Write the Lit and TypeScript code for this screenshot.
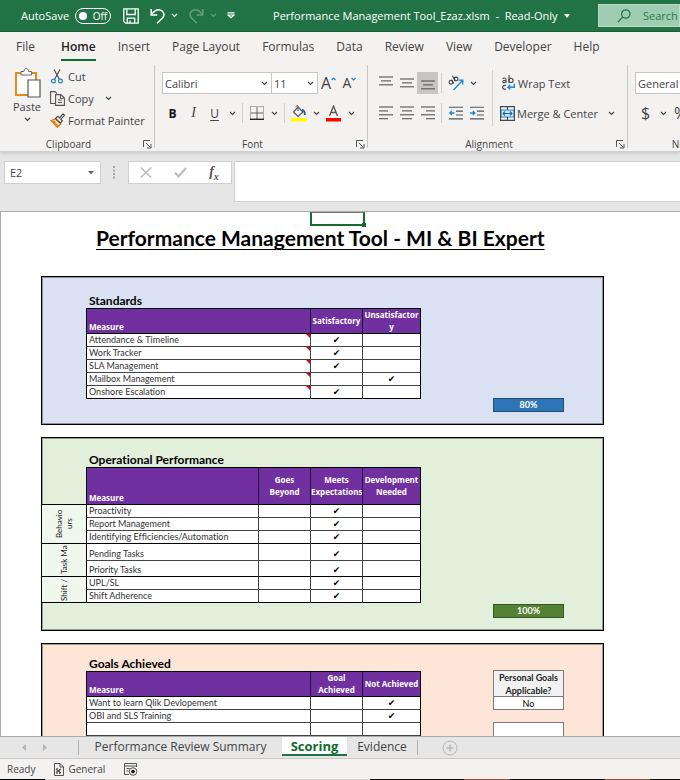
import { LitElement, html, css, svg, nothing } from "lit";
import { customElement, property } from "lit/decorators.js";
import { classMap } from "lit/directives/class-map.js";

const chevron = () => html`<svg class="chev" width="7" height="5" viewBox="0 0 7 5" fill="none" stroke="currentColor" stroke-width="1.1"><path d="M1 1l2.5 2.5L6 1" /></svg>`;

const launcher = (label: string) => html`<button class="launch" aria-label=${label}>
  <svg width="9" height="9" viewBox="0 0 9 9" fill="none" stroke="#555" stroke-width="1"><path d="M.5 7V.5H7M3 3l4.5 4.5M8 4v4H4" /></svg>
</button>`;

/* Stacked strokes, one [x1, x2] pair per line. */
const lines = (rows: number[][], top: number) => html`<svg width="14" height="14" viewBox="0 0 14 14" stroke="#555" stroke-width="1.1">
  ${rows.map(([a, b], i) => svg`<path d=${`M${a} ${top + i * 3.9}H${b}`} />`)}
</svg>`;

const indent = (arrow: string) => html`<svg width="14" height="14" viewBox="0 0 14 14" fill="none" stroke="#555" stroke-width="1.1">
  <path d="M0 1.2h14M7 5.1h7M7 9h7M0 12.9h14" /><path d=${arrow} stroke="#1e86d8" stroke-width="1.3" />
</svg>`;

interface Row {
  name: string;
  marks: boolean[];
  group?: string;
  span?: number;
  tall?: boolean;
  note?: boolean;
}

@customElement("score-table")
export class ScoreTable extends LitElement {
  static styles = css`
    :host { display: block; flex: none; }
    table { border-collapse: separate; border-spacing: 0; table-layout: fixed; width: 335px; }
    table.grouped { width: 379px; }
    .group { width: 44px; }
    .c { width: 52px; }
    .last { width: 58px; }
    th, td {
      box-sizing: border-box; height: 13px; padding: 0; overflow: hidden;
      font-size: 9px; line-height: 12px; text-align: center; vertical-align: middle;
      border-right: 1px solid #444; border-bottom: 1px solid #444; background: #fff; color: #333;
    }
    tbody th { font-weight: 400; text-align: left; padding-left: 2px; position: relative; white-space: nowrap; }
    thead th {
      height: 25px; background: #7030a0; color: #fff; font-weight: 700; font-size: 8px; white-space: pre;
      font-family: "Open Sans", sans-serif; border-right-color: #2a0a45; border-top: 1px solid #000;
    }
    table.grouped thead th { height: 38px; }
    thead th.measure { text-align: left; vertical-align: bottom; padding-left: 2px; border-left: 1px solid #000; }
    tbody th.name { border-left: 1px solid #000; }
    thead tr > *, tbody tr.end > *, tbody th.side { border-bottom-color: #000; }
    tr > :last-child { border-right-color: #000; }
    tr.tall > * { height: 17px; vertical-align: bottom; }
    tr.tall.end > * { height: 16px; }
    thead td.corner { background: none; border-right: 0; }
    tbody th.side { background: #f0f7ec; border-right: 0; padding: 0; color: #222; vertical-align: middle; font-size: 8px; }
    .vert {
      display: flex; align-items: center; justify-content: center; width: 12px; height: 24px; margin: 0 auto;
      overflow: hidden; writing-mode: vertical-rl; transform: rotate(180deg); line-height: 10px;
    }
    .vert.task { height: 32px; }
    .vert.two { width: 20px; height: 36px; text-align: center; }
    .vert span { white-space: pre; }
    .note::after {
      content: ""; position: absolute; right: 0; top: 0;
      border-top: 4px solid #e00000; border-left: 4px solid transparent;
    }
    td.mark { font-family: "DejaVu Sans", sans-serif; color: #000; }
  `;

  @property({ attribute: false }) heads: string[] = [];
  @property({ attribute: false }) rows: Row[] = [];
  @property({ type: Boolean }) grouped = false;

  render() {
    const { heads, rows, grouped } = this;
    return html`<table class=${classMap({ grouped })}>
      <colgroup>
        ${grouped ? html`<col class="group" />` : nothing}
        <col />
        ${heads.map((_, i) => html`<col class=${i === heads.length - 1 ? "last" : "c"} />`)}
      </colgroup>
      <thead><tr>
        ${grouped ? html`<td class="corner"></td>` : nothing}
        <th class="measure" scope="col">Measure</th>
        ${heads.map((h) => html`<th scope="col">${h}</th>`)}
      </tr></thead>
      <tbody>
        ${rows.map((r, i) => html`<tr class=${classMap({ tall: !!r.tall, end: i === rows.length - 1 || !!rows[i + 1].group })}>
          ${r.group ? html`<th class="side" scope="rowgroup" rowspan=${r.span ?? 1}>
            <div class=${classMap({ vert: true, task: !!r.tall, two: r.group.includes("\n") })}><span>${r.group}</span></div></th>` : nothing}
          <th class=${classMap({ name: true, note: !!r.note })} scope="row">${r.name}</th>
          ${r.marks.map((m) => html`<td class="mark">${m ? "✔" : ""}</td>`)}
        </tr>`)}
      </tbody>
    </table>`;
  }
}

@customElement("app-root")
export class AppRoot extends LitElement {
  static styles = css`
    :host {
      display: flex; flex-direction: column; height: 100vh; overflow: hidden;
      font-family: "Open Sans", "Noto Sans", sans-serif; font-size: 11px; color: #444; background: #e6e6e6;
    }
    * { box-sizing: border-box; }
    button, input, select, textarea { font: inherit; color: inherit; margin: 0; padding: 0; border: 0; background: none; border-radius: 0; outline: 0; }
    button { display: inline-flex; align-items: center; justify-content: center; white-space: nowrap; }
    svg { flex: none; display: block; }

    .titlebar { display: flex; align-items: center; height: 32px; flex: none; background: #217346; border-bottom: 1px solid #1a5c38; color: #fff; padding-left: 21px; }
    .autosave { display: flex; align-items: center; gap: 6px; }
    .toggle { width: 36px; height: 16px; border: 1px solid #fff; border-radius: 8px; gap: 6px; font-size: 10px; }
    .toggle i { width: 8px; height: 8px; border-radius: 50%; background: #fff; }
    .quick { display: flex; align-items: center; margin-left: 12px; }
    .quick .g { margin-left: 11px; }
    .quick .s { margin-left: 6px; }
    .quick .dim { opacity: .3; }
    .quick .more { margin-left: 10px; }
    .doc { margin-left: 38px; flex: 1; justify-content: flex-start; gap: 6px; }
    .search { display: flex; align-items: center; gap: 12px; flex: none; width: 82px; height: 23px; background: #a0cdb2; border: 1px solid #b9dcc6; padding-left: 18px; color: #217346; overflow: hidden; }
    .search input { width: 100px; flex: none; }
    .search input::placeholder { color: #2c7a50; opacity: 1; }

    .tabs { display: flex; height: 30px; flex: none; background: #f3f2f1; padding-left: 16px; gap: 22px; align-items: center; }
    .tabs button { font-size: 12px; height: 28px; border-bottom: 2px solid transparent; }
    .tabs button:first-child { margin-right: 4px; }
    .tabs button.on { font-weight: 600; color: #222; border-color: #0f6b2f; }

    .ribbon { display: flex; height: 90px; flex: none; background: #f3f2f1; border-bottom: 1px solid #d0d0d0; padding-top: 3px; overflow: hidden; box-shadow: 0 2px 3px #cfcfcf; position: relative; }
    .group { position: relative; display: flex; flex-direction: column; flex: none; height: 86px; }
    .group::after { content: ""; position: absolute; right: 0; top: 0; bottom: 3px; width: 1px; background: #c8c6c4; }
    .body { flex: 1; }
    .foot { position: relative; height: 14px; line-height: 14px; font-size: 10px; text-align: center; padding-right: 18px; }
    .launch { position: absolute; right: 3px; top: 3px; }
    .clip { width: 155px; }
    .font { width: 213px; }
    .align { width: 260px; }
    .num { width: 144px; }
    .clip .body { display: flex; padding-left: 11px; }
    .paste { flex-direction: column; width: 32px; gap: 1px; justify-content: flex-start; padding-top: 3px; }
    .paste .chev { margin-top: 2px; }
    .side { display: flex; flex-direction: column; align-items: flex-start; margin-left: 7px; }
    .side button { height: 22px; gap: 3px; }
    .side .chev { margin-left: 8px; }
    .rows { display: flex; flex-direction: column; align-items: flex-start; gap: 8px; padding: 7px 0 0 7px; }
    .row { display: flex; align-items: center; height: 22px; }
    .select { position: relative; display: block; height: 22px; border: 1px solid #c8c6c4; background: #fff; }
    .select select { appearance: none; width: 100%; height: 20px; padding-left: 2px; }
    .select .chev { position: absolute; right: 3px; top: 8px; pointer-events: none; }
    .face { width: 110px; }
    .size { width: 46px; border-left: 0; }
    .fmt { width: 100px; }
    .ib { width: 21px; height: 22px; flex: none; }
    .ib.on { background: #c8c6c4; }
    .ib.c { width: 14px; }
    .ib.l { font-size: 16px; line-height: 20px; }
    .ib.m { font-size: 14px; line-height: 20px; }
    .b { font-weight: 700; font-size: 12px; color: #111; }
    .i { font-style: italic; font-family: "Liberation Serif", serif; font-size: 14px; }
    .u { text-decoration: underline; text-underline-offset: 2px; font-size: 12px; }
    .bar { width: 1px; height: 20px; background: #d2d0ce; margin: 0 3px; flex: none; }
    .align .body { display: flex; }
    .tall { width: 1px; height: 56px; background: #d2d0ce; margin: 5px 0 0 5px; }
    .wide { gap: 2px; height: 22px; }
    .wide .chev { margin-left: 8px; }

    .fbar { display: flex; align-items: flex-start; height: 60px; flex: none; padding: 9px 0 0 4px; border-bottom: 1px solid #ababab; }
    .name { display: flex; align-items: center; width: 97px; height: 23px; background: #fff; border: 1px solid #cfcfcf; }
    .name input { flex: 1; min-width: 0; padding-left: 5px; }
    .name button { width: 18px; height: 20px; }
    .grip { margin: 5px 12px 0 12px; }
    .ops { display: flex; align-items: center; width: 104px; height: 23px; background: #fff; border: 1px solid #cfcfcf; margin-right: 2px; }
    .ops button { flex: 1; }
    .fx { font: italic 700 14px "Liberation Serif", serif; color: #555; }
    .fx sub { font-size: 10px; line-height: 8px; }
    .formula { flex: 1; height: 41px; background: #fff; border: 1px solid #cfcfcf; border-right: 0; resize: none; }

    .sheet { position: relative; flex: 1; min-height: 0; overflow: hidden; background: #fff; border-left: 1px solid #ababab; font-family: "Lato", "Open Sans", sans-serif; font-variant-ligatures: none; color: #000; padding: 0 76px 0 40px; }
    .cursor { position: absolute; left: 309px; top: 0; width: 55px; height: 14px; border: 2px solid #1a6b2f; border-top: 1px solid #777; }
    .cursor i { position: absolute; right: -3px; bottom: -3px; width: 4px; height: 4px; background: #1a6b2f; }
    h1 { margin: 14px 0 27px 55px; font-size: 21px; line-height: 23px; font-weight: 700; text-decoration: underline; text-decoration-thickness: 1px; text-underline-offset: 3px; white-space: nowrap; }
    .panel { display: flex; justify-content: space-between; border: 1px solid #000; box-shadow: inset 0 0 0 1px rgba(0, 0, 0, .35); margin-bottom: 12px; padding-right: 39px; }
    .blue { background: #d9e1f2; height: 149px; }
    .green { background: #e2efda; height: 194px; }
    .peach { background: #fde5d8; height: 194px; }
    h2 { margin: 0; padding-left: 47px; font-size: 12px; line-height: 14px; font-weight: 700; }
    .blue h2 { padding-top: 17px; }
    .green h2 { padding-top: 15px; }
    .peach h2 { padding-top: 13px; }
    .in { margin-left: 44px; }
    .pct { width: 71px; height: 14px; line-height: 12px; font-size: 9px; font-weight: 700; color: #fff; text-align: center; border: 1px solid #1f4e79; background: #2e75b6; align-self: flex-end; margin-bottom: 12px; }
    .green .pct { background: #548235; border-color: #375623; }
    .goals { width: 71px; margin-top: 26px; font-size: 9px; line-height: 12px; text-align: center; }
    .goals label { display: block; height: 27px; border: 1px solid #7a7a7a; background: #f2f2f2; font-weight: 700; line-height: 13px; color: #222; white-space: nowrap; }
    .goals input { display: block; width: 100%; height: 13px; border: 1px solid #7a7a7a; border-top: 0; background: #fff; text-align: center; }
    .goals .next { margin-top: 12px; border-top: 1px solid #7a7a7a; height: 27px; }

    .sheets { display: flex; align-items: flex-start; height: 23px; flex: none; border-top: 1px solid #ababab; border-bottom: 1px solid #c8c8c8; font-size: 12px; }
    .sheets button { height: 18px; }
    .sheets .nav { width: 21px; height: 21px; }
    .sheets .nav:first-child { margin-left: 13px; }
    .sheets .bar { height: 15px; margin: 3px 0 0 23px; background: #b0b0b0; }
    .sheets .t1 { width: 203px; }
    .sheets .t2 { width: 65px; height: 19px; background: #fff; color: #0f6b2f; font-size: 13px; font-weight: 700; border-bottom: 2px solid #217346; }
    .sheets .t3 { width: 70px; }
    .sheets .bar.e { margin-left: 0; }
    .sheets .add { margin: 3px 0 0 24px; height: 16px; }

    .status { display: flex; align-items: center; height: 20px; flex: none; background: #f3f2f1; padding-left: 7px; gap: 19px; font-size: 10px; }
    .status button { gap: 4px; }
    .task { height: 1px; flex: none; background: linear-gradient(90deg, #000 45px, #d5d5d5 45px 370px, #111 370px 464px, #a0522d 464px 510px, #111 510px 605px, #a0522d 605px 650px, #111 650px); }
  `;

  private tabs = ["File", "Home", "Insert", "Page Layout", "Formulas", "Data", "Review", "View", "Developer", "Help"];

  private standards: Row[] = [
    { name: "Attendance & Timeline", marks: [true, false], note: true },
    { name: "Work Tracker", marks: [true, false], note: true },
    { name: "SLA Management", marks: [true, false], note: true },
    { name: "Mailbox Management", marks: [false, true], note: true },
    { name: "Onshore Escalation", marks: [true, false], note: true },
  ];

  private operations: Row[] = [
    { name: "Proactivity", marks: [false, true, false], group: "Behavio\nurs", span: 3 },
    { name: "Report Management", marks: [false, true, false] },
    { name: "Identifying Efficiencies/Automation", marks: [false, true, false] },
    { name: "Pending Tasks", marks: [false, true, false], group: "Task Ma", span: 2, tall: true },
    { name: "Priority Tasks", marks: [false, true, false], tall: true },
    { name: "UPL/SL", marks: [false, true, false], group: "Shift /", span: 2 },
    { name: "Shift Adherence", marks: [false, true, false] },
  ];

  private goals: Row[] = [
    { name: "Want to learn Qlik Devlopement", marks: [false, true] },
    { name: "OBI and SLS Training", marks: [false, true] },
    { name: "", marks: [false, false] },
    { name: "", marks: [false, false] },
  ];

  private titlebar() {
    return html`<header class="titlebar">
      <div class="autosave"><span id="as">AutoSave</span><button class="toggle" aria-labelledby="as"><i></i>Off</button></div>
      <div class="quick">
        <button aria-label="Save"><svg width="16" height="16" viewBox="0 0 16 16" fill="none" stroke="#fff" stroke-width="1.3"><path d="M.8.8h14.4v14.4H2.5L.8 13.5zM3.8.8v5.7h8.4V.8M4.3 15.2v-5h7.4v5M7 15v-2.5" /></svg></button>
        <button class="g" aria-label="Undo"><svg width="15" height="16" viewBox="0 0 15 16" fill="none" stroke="#fff" stroke-width="1.5"><path d="M1.2 1v6h6M1.5 6.7C4 3 7 1.3 10 2c4 1 5 5 2.7 7.8L7 15.3" /></svg></button>
        <button class="s" aria-label="Undo list">${chevron()}</button>
        <button class="g dim" aria-label="Redo"><svg width="15" height="16" viewBox="0 0 15 16" fill="none" stroke="#fff" stroke-width="1.5"><path d="M13.8 1v6h-6M13.5 6.7C11 3 8 1.3 5 2 1 3 0 7 2.3 9.8L8 15.3" /></svg></button>
        <button class="s dim" aria-label="Redo list">${chevron()}</button>
        <button class="more" aria-label="Customize toolbar"><svg width="8" height="7" viewBox="0 0 8 7" fill="none" stroke="#fff" stroke-width="1.2"><path d="M.5.8h7M1 3l3 2.8L7 3z" /></svg></button>
      </div>
      <button class="doc"><span>Performance Management Tool_Ezaz.xlsm &nbsp;-&nbsp; Read-Only</span><svg width="6" height="4" viewBox="0 0 6 4" fill="#fff"><path d="M0 0h6L3 4z" /></svg></button>
      <label class="search">
        <svg width="14" height="14" viewBox="0 0 14 14" fill="none" stroke="#217346" stroke-width="1.2"><circle cx="8.8" cy="5" r="4.2" /><path d="M5.8 8L.8 13.2" /></svg>
        <input type="text" placeholder="Search" aria-label="Search" />
      </label>
    </header>`;
  }

  private clipboard() {
    return html`<section class="group clip">
      <div class="body">
        <button class="paste">
          <svg width="27" height="30" viewBox="0 0 27 30" fill="none"><path d="M2 5h20v22H2z" fill="#fff" stroke="#e88a1a" stroke-width="2" /><path d="M7 7V3.5h3c0-4 4.5-4 4.5 0h3V7z" fill="#fff" stroke="#666" /><path d="M14 12h12v17H14z" fill="#fff" stroke="#555" stroke-width="1.2" /></svg>
          <span>Paste</span>${chevron()}
        </button>
        <div class="side">
          <button><svg width="15" height="15" viewBox="0 0 15 15" fill="none"><path d="M4 .5l5.5 10M10 .5l-5.5 10" stroke="#444" stroke-width="1.1" /><circle cx="3.5" cy="12" r="1.9" stroke="#1e86d8" stroke-width="1.2" /><circle cx="10.5" cy="12" r="1.9" stroke="#1e86d8" stroke-width="1.2" /></svg>Cut</button>
          <button><svg width="15" height="15" viewBox="0 0 15 15" fill="none" stroke="#555" stroke-width="1.1"><path d="M5 12.5H.6V.6H5l2 2M5.6 3.6h5.4l3.4 3.4v7.4H5.6zM10.5 3.6v3.7h4M8 9h4M8 11.5h4" /></svg>Copy${chevron()}</button>
          <button><svg width="15" height="15" viewBox="0 0 15 15" fill="none"><path d="M.8 7.5l5-1.5 5 5-3.5 3.2z" fill="#fbe0c0" stroke="#e07b10" stroke-width="1.3" /><path d="M3.5 8.5l4.5 4.5M2 8l3.5.5" stroke="#e07b10" stroke-width="1.1" /><path d="M5.5 5.5L7.8 3.2l1.7 1.7L13 .8l1.5 1.5-3.8 3.9 1.7 1.6-2 2.2z" fill="#f3f2f1" stroke="#444" stroke-width="1.1" /></svg>Format Painter</button>
        </div>
      </div>
      <div class="foot">Clipboard${launcher("Clipboard options")}</div>
    </section>`;
  }

  private fontGroup() {
    return html`<section class="group font">
      <div class="body rows">
        <div class="row">
          <span class="select face"><select aria-label="Font"><option>Calibri</option></select>${chevron()}</span>
          <span class="select size"><select aria-label="Font size"><option>11</option></select>${chevron()}</span>
          <button class="ib l" aria-label="Increase font size">A<svg width="5" height="12" viewBox="0 0 5 12" fill="none" stroke="#1e86d8" stroke-width="1.2"><path d="M.5 3l2-2 2 2" /></svg></button>
          <button class="ib m" aria-label="Decrease font size">A<svg width="5" height="12" viewBox="0 0 5 12" fill="none" stroke="#1e86d8" stroke-width="1.2"><path d="M.5 1l2 2 2-2" /></svg></button>
        </div>
        <div class="row">
          <button class="ib b">B</button><button class="ib i">I</button><button class="ib u">U</button>
          <button class="ib c" aria-label="Underline styles">${chevron()}</button><span class="bar"></span>
          <button class="ib" aria-label="Borders"><svg width="14" height="14" viewBox="0 0 14 14" fill="none" stroke="#666"><path d="M.5.5h13v12.5M.5.5v12.5" stroke-dasharray="1 1" /><path d="M7 1v12M1 7h12" /><path d="M0 13.3h14" stroke="#222" stroke-width="1.4" /></svg></button>
          <button class="ib c" aria-label="Border styles">${chevron()}</button><span class="bar"></span>
          <button class="ib" aria-label="Fill colour"><svg width="16" height="17" viewBox="0 0 16 17" fill="none"><path d="M7 2l5 5-5 4.5L2.5 7z" stroke="#555" stroke-width="1.2" /><path d="M7 6V1.5C7 0 5 .3 5 2" stroke="#555" /><path d="M11 5c2 0 3 2 2.8 5" stroke="#1c5fa8" stroke-width="1.8" /><path d="M0 13h16v3.5H0z" fill="#ffff00" /></svg></button>
          <button class="ib c" aria-label="Fill colours">${chevron()}</button>
          <button class="ib" aria-label="Font colour"><svg width="15" height="17" viewBox="0 0 15 17" fill="none"><path d="M3.5 11l4-10 4 10M4.8 7.5h5.4" stroke="#555" stroke-width="1.3" /><path d="M0 13h15v3.5H0z" fill="#f00" /></svg></button>
          <button class="ib c" aria-label="Font colours">${chevron()}</button>
        </div>
      </div>
      <div class="foot">Font${launcher("Font options")}</div>
    </section>`;
  }

  private alignGroup() {
    return html`<section class="group align">
      <div class="body">
        <div class="rows">
          <div class="row">
            <button class="ib" aria-label="Top align">${lines([[0, 14], [2, 12], [0, 14]], 1)}</button>
            <button class="ib" aria-label="Middle align">${lines([[0, 14], [2, 12], [0, 14]], 3)}</button>
            <button class="ib on" aria-label="Bottom align">${lines([[0, 14], [2, 12], [0, 14]], 5)}</button>
            <span class="bar"></span>
            <button class="ib" aria-label="Orientation"><svg width="16" height="16" viewBox="0 0 16 16" fill="none"><g stroke="#444" stroke-width="1.1"><circle cx="3" cy="7.2" r="1.9" /><path d="M3.2 4.8l2.6 3.6" /><circle cx="8" cy="4" r="1.9" /><path d="M4.3.8l3 4.8" /></g><path d="M5.5 15L14.5 5.5M10.5 5.2h4.3v4.3" stroke="#1e86d8" stroke-width="1.3" /></svg></button>
            <button class="ib c" aria-label="Orientation list">${chevron()}</button>
          </div>
          <div class="row">
            <button class="ib" aria-label="Align left">${lines([[0, 14], [0, 9], [0, 14], [0, 9]], 1)}</button>
            <button class="ib" aria-label="Centre">${lines([[0, 14], [2, 12], [0, 14], [2, 12]], 1)}</button>
            <button class="ib" aria-label="Align right">${lines([[0, 14], [5, 14], [0, 14], [5, 14]], 1)}</button>
            <span class="bar"></span>
            <button class="ib" aria-label="Decrease indent">${indent("M5.5 7H.8M2.8 5L.8 7l2 2")}</button>
            <button class="ib" aria-label="Increase indent">${indent("M0 7h4.7M2.9 5l2 2-2 2")}</button>
          </div>
        </div>
        <span class="tall"></span>
        <div class="rows">
          <button class="wide"><svg width="16" height="16" viewBox="0 0 16 16" fill="none"><g stroke="#444" stroke-width="1.1"><path d="M2.5 3.7C4 2.5 6 3 6 4.5v3.3M6 5.2C2.5 5 1.8 7.6 4 7.6c1 0 2-.6 2-1.5M9 0v7.8" /><circle cx="11" cy="5.4" r="2.1" /><path d="M6 10.6c-4-1.5-5 4.5 0 3.5" /></g><path d="M14.3 8.8v3.5H8M10.3 10l-2.4 2.3 2.4 2.3" stroke="#1e86d8" stroke-width="1.4" /></svg>Wrap Text</button>
          <button class="wide"><svg width="15" height="15" viewBox="0 0 15 15" fill="none"><path d="M1 4h13v7H1z" fill="#cfe6f8" stroke="#1e86d8" /><path d="M.6.6h13.8v13.8H.6zM7.5.6V4M7.5 11v3.4" stroke="#444" stroke-width="1.1" /><path d="M3 7.5h9M5 5.5l-2 2 2 2M10 5.5l2 2-2 2" stroke="#1469b5" stroke-width="1.1" /></svg>Merge &amp; Center${chevron()}</button>
        </div>
      </div>
      <div class="foot">Alignment${launcher("Alignment options")}</div>
    </section>`;
  }

  private numberGroup() {
    return html`<section class="group num">
      <div class="body rows">
        <div class="row"><span class="select fmt"><select aria-label="Number format"><option>General</option></select></span></div>
        <div class="row"><button class="ib l">$</button><button class="ib c" aria-label="Currency list">${chevron()}</button><button class="ib l">%</button></div>
      </div>
      <div class="foot">Number</div>
    </section>`;
  }

  private formulaBar() {
    return html`<div class="fbar">
      <div class="name"><input type="text" value="E2" aria-label="Name box" /><button aria-label="Names"><svg width="6" height="4" viewBox="0 0 6 4" fill="#666"><path d="M0 0h6L3 3.5z" /></svg></button></div>
      <svg class="grip" width="3" height="13" viewBox="0 0 3 13" fill="#aaa"><path d="M0 0h2v2H0zM0 3.5h2v2H0zM0 7h2v2H0zM0 10.5h2v2H0z" /></svg>
      <div class="ops">
        <button aria-label="Cancel"><svg width="12" height="11" viewBox="0 0 12 11" stroke="#bbb" stroke-width="1.5"><path d="M.8.5l10.4 10M11.2.5L.8 10.5" /></svg></button>
        <button aria-label="Enter"><svg width="13" height="11" viewBox="0 0 13 11" fill="none" stroke="#bbb" stroke-width="2"><path d="M1 5.5l3.5 4L12 1" /></svg></button>
        <button class="fx" aria-label="Insert function"><span>f<sub>x</sub></span></button>
      </div>
      <textarea class="formula" aria-label="Formula"></textarea>
    </div>`;
  }

  private sheet() {
    return html`<main class="sheet">
      <div class="cursor"><i></i></div>
      <h1>Performance Management Tool - MI &amp; BI Expert</h1>
      <section class="panel blue">
        <div><h2>Standards</h2>
          <score-table class="in" .heads=${["Satisfactory", "Unsatisfactor\ny"]} .rows=${this.standards}></score-table></div>
        <div class="pct">80%</div>
      </section>
      <section class="panel green">
        <div><h2>Operational Performance</h2>
          <score-table grouped .heads=${["Goes\nBeyond", "Meets\nExpectations", "Development\nNeeded"]} .rows=${this.operations}></score-table></div>
        <div class="pct">100%</div>
      </section>
      <section class="panel peach">
        <div><h2>Goals Achieved</h2>
          <score-table class="in" .heads=${["Goal\nAchieved", "Not Achieved"]} .rows=${this.goals}></score-table></div>
        <div class="goals"><label for="pg">Personal Goals<br />Applicable?</label><input id="pg" type="text" value="No" /><input class="next" type="text" aria-label="Score" /></div>
      </section>
    </main>`;
  }

  render() {
    return html`
      ${this.titlebar()}
      <nav class="tabs">${this.tabs.map((t) => html`<button class=${classMap({ on: t === "Home" })}>${t}</button>`)}</nav>
      <div class="ribbon">${this.clipboard()}${this.fontGroup()}${this.alignGroup()}${this.numberGroup()}</div>
      ${this.formulaBar()}
      ${this.sheet()}
      <nav class="sheets">
        <button class="nav" aria-label="Previous sheet"><svg width="4" height="7" viewBox="0 0 4 7" fill="#b5b5b5"><path d="M4 0v7L0 3.5z" /></svg></button>
        <button class="nav" aria-label="Next sheet"><svg width="4" height="7" viewBox="0 0 4 7" fill="#b5b5b5"><path d="M0 0v7l4-3.5z" /></svg></button>
        <span class="bar"></span>
        <button class="t1">Performance Review Summary</button>
        <button class="t2">Scoring</button>
        <button class="t3">Evidence</button>
        <span class="bar e"></span>
        <button class="add" aria-label="New sheet"><svg width="16" height="16" viewBox="0 0 16 16" fill="none" stroke="#b8b8b8"><circle cx="8" cy="8" r="7" /><path d="M8 4.5v7M4.5 8h7" stroke-width="1.5" /></svg></button>
      </nav>
      <footer class="status">
        <span>Ready</span>
        <button><svg width="10" height="13" viewBox="0 0 10 13" fill="none" stroke="#555"><path d="M.5.5H6L9.5 4v8.5h-9zM6 .5V4h3.5" /><path d="M2 6l5 4M2 9.5L7 6M3 5v6M5.5 6v5" stroke-width="1.2" /></svg>General</button>
        <button aria-label="Record macro"><svg width="14" height="13" viewBox="0 0 14 13" fill="none" stroke="#555"><path d="M5 11.5H.5V.5h12V4M.5 3h12M2.5 5.5h3M2.5 8h2" /><circle cx="9" cy="8.5" r="3.8" /><circle cx="9" cy="8.5" r="1.8" fill="#111" stroke="none" /></svg></button>
      </footer>
      <div class="task"></div>
    `;
  }
}
